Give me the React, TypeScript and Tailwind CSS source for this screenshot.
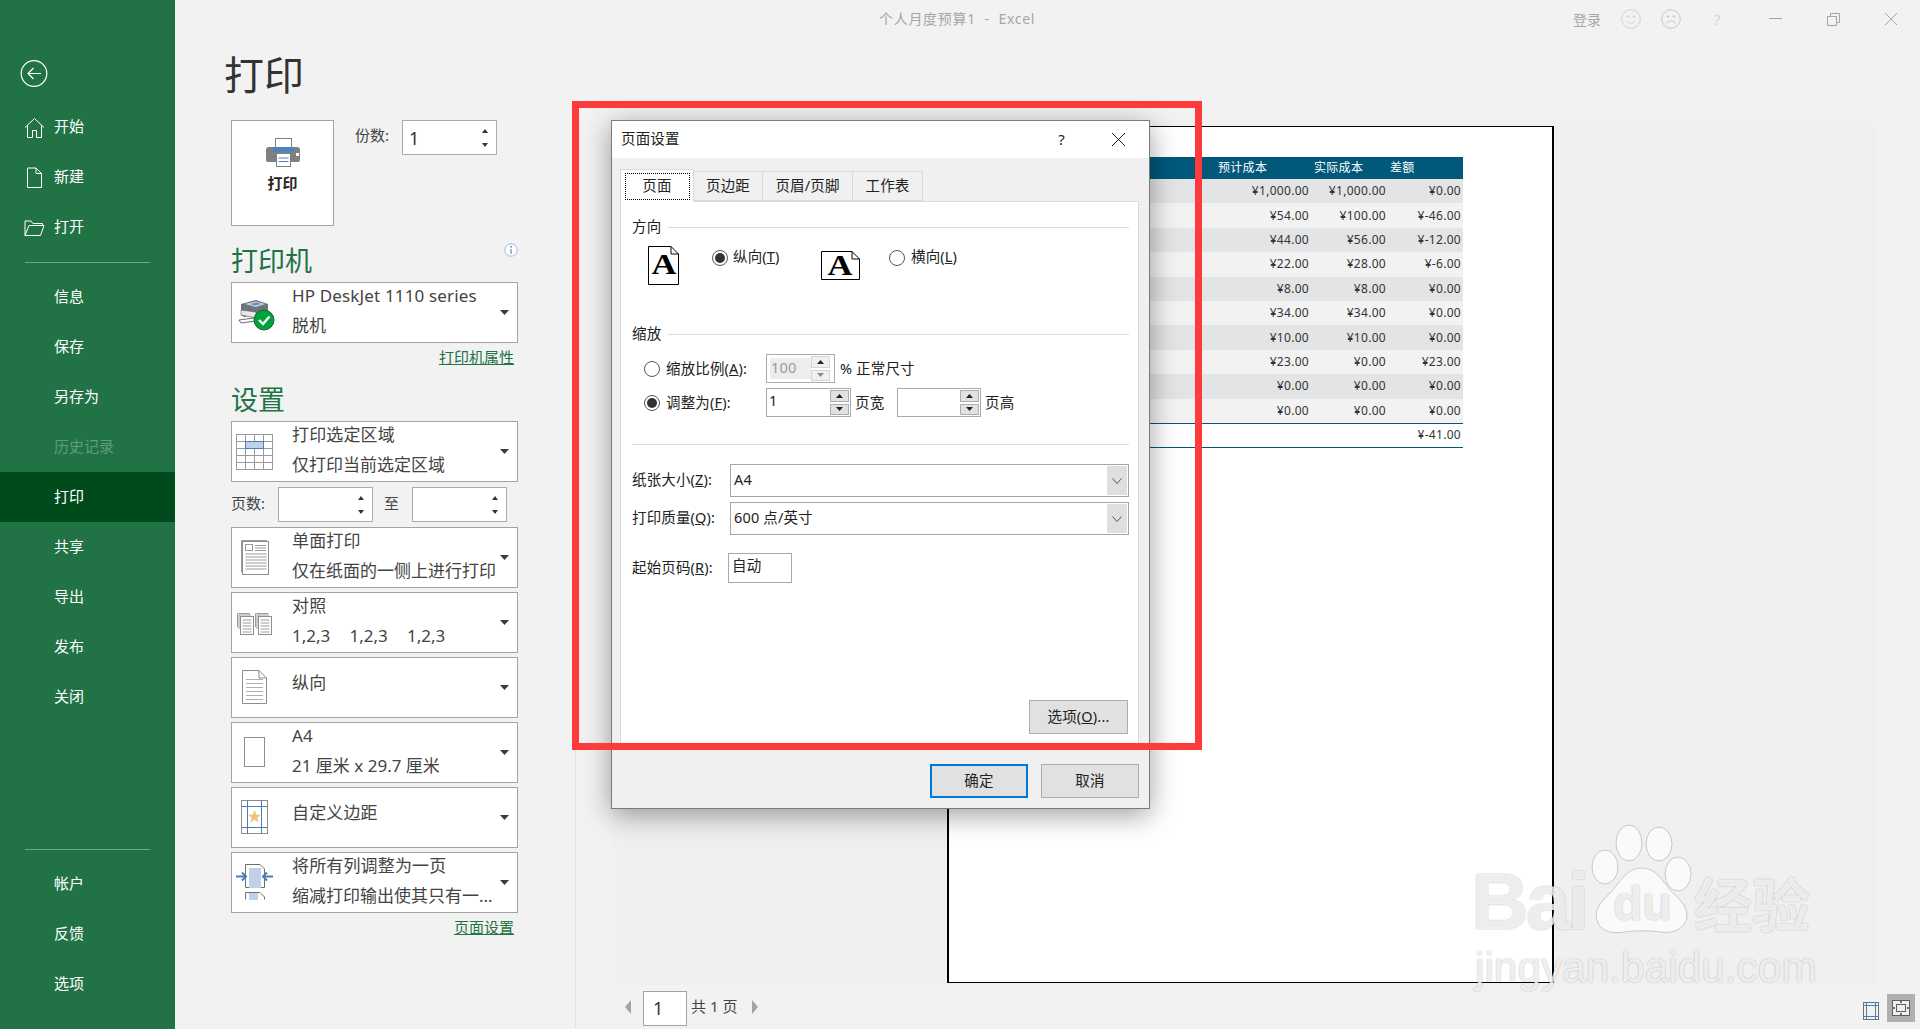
import React from "react";

const Caret = () => (
  <svg width="9" height="5" viewBox="0 0 9 5" className="shrink-0">
    <polygon points="0,0 9,0 4.5,5" fill="#3a3a3a" />
  </svg>
);

const NavIcon = ({ kind }: { kind: string }) => {
  if (kind === "home")
    return (
      <svg width="21" height="21" viewBox="0 0 21 21" fill="none" stroke="#fff" strokeWidth="1">
        <path d="M1 10.5 10.5 1.5 20 10.5M3.5 8.5V20.5H8.5V13.5H12.5V20.5H17.5V8.5" />
      </svg>
    );
  if (kind === "doc")
    return (
      <svg width="21" height="21" viewBox="0 0 21 21" fill="none" stroke="#fff" strokeWidth="1">
        <path d="M3.5 1V20.5H17.5V6.5L12 1H3.5ZM12 1V6.5H17.5" />
      </svg>
    );
  return (
    <svg width="21" height="21" viewBox="0 0 21 21" fill="none" stroke="#fff" strokeWidth="1">
      <path d="M1 18.5V4H7L9 6.5H18.5V8.5M1 18.5H16.5L20 8.5H5L1 18.5Z" />
    </svg>
  );
};

const NavRow = ({ label, icon, active, disabled }: { label: string; icon?: string; active?: boolean; disabled?: boolean }) => (
  <div className={`flex h-[50px] items-center pl-[24px] text-[15px] ${active ? "bg-[#004b1c]" : ""} ${disabled ? "text-[#5f9e7d]" : "text-white"}`}>
    <span className="flex w-[30px] items-center">{icon ? <NavIcon kind={icon} /> : null}</span>
    <span className="pb-[2px]">{label}</span>
  </div>
);

const Sidebar = () => (
  <aside className="flex h-full w-[175px] shrink-0 flex-col bg-[#217346] pb-[20px]">
    <div className="ml-[20px] mt-[59px] h-[28px]">
      <svg width="28" height="29" viewBox="0 0 28 29" fill="none" stroke="#fff" strokeWidth="1.2">
        <circle cx="14" cy="14.5" r="12.8" />
        <path d="M21 14.5H8M13.5 9 8 14.5 13.5 20" />
      </svg>
    </div>
    <div className="mt-[15px]">
      <NavRow label="开始" icon="home" />
      <NavRow label="新建" icon="doc" />
      <NavRow label="打开" icon="folder" />
    </div>
    <div className="mx-[25px] mb-[9px] mt-[10px] h-px bg-[#6fa78b]" />
    <NavRow label="信息" />
    <NavRow label="保存" />
    <NavRow label="另存为" />
    <NavRow label="历史记录" disabled />
    <NavRow label="打印" active />
    <NavRow label="共享" />
    <NavRow label="导出" />
    <NavRow label="发布" />
    <NavRow label="关闭" />
    <div className="mt-auto">
      <div className="mx-[25px] mb-[9px] h-px bg-[#6fa78b]" />
      <NavRow label="帐户" />
      <NavRow label="反馈" />
      <NavRow label="选项" />
    </div>
  </aside>
);

const SpinBox = ({ value }: { value?: string }) => (
  <div className="flex h-[35px] w-[95px] items-center justify-between border border-[#ababab] bg-white pl-[6px] pr-[8px]">
    <span className="text-[18px] leading-none text-[#333]">{value}</span>
    <div className="flex h-full flex-col justify-center gap-[10px]">
      <svg width="6" height="4" viewBox="0 0 6 4"><polygon points="3,0 6,4 0,4" fill="#333" /></svg>
      <svg width="6" height="4" viewBox="0 0 6 4"><polygon points="0,0 6,0 3,4" fill="#333" /></svg>
    </div>
  </div>
);

const G = "#9b9b9b";

const IconPrinter = () => (
  <svg width="44" height="44" viewBox="0 0 44 44" fill="none">
    <path d="M5 13 20 9 32 13 32 22 8 26 5 24Z" fill="#6f7478" />
    <path d="M9 13 20 10.5 29 13 20 16Z" fill="#c9d8e4" />
    <path d="M14 13 21 11.5 25 13 19 14.5Z" fill="#5b8fc4" />
    <path d="M5 19 20 21 20 27 5 24Z" fill="#e8e8e8" stroke="#555" strokeWidth=".6" />
    <path d="M3 29 18 27 20 30 5 32Z" fill="#fff" stroke="#444" strokeWidth=".8" />
    <circle cx="28" cy="29" r="10" fill="#00a33a" stroke="#06712c" />
    <path d="M23 29 27 33 33.5 25.5" stroke="#fff" strokeWidth="2.4" />
  </svg>
);

const IconGrid = () => (
  <svg width="44" height="44" viewBox="0 0 44 44" fill="none" stroke={G}>
    <rect x=".5" y="4.5" width="36" height="35" fill="#fff" />
    <path d="M9.5 4.5v35M18.5 4.5v35M27.5 4.5v35M.5 11.5h36M.5 18.5h36M.5 25.5h36M.5 32.5h36" />
    <rect x="9.5" y="11.5" width="18" height="7" fill="#bfd1e8" stroke="#4a7fb5" />
  </svg>
);

const IconOneSide = () => (
  <svg width="44" height="44" viewBox="0 0 44 44" fill="none" stroke={G}>
    <path d="M5.5 37V5.5H31" />
    <rect x="6.5" y="6.5" width="26" height="33" fill="#fff" stroke="#8d8d8d" />
    <rect x="9.5" y="9.5" width="7" height="6" />
    <path d="M19 10.5h11M19 13h11M19 15.5h11M9.5 19h21M9.5 22h21M9.5 25h21M9.5 28h21M9.5 31h21M9.5 34h21" />
  </svg>
);

const MiniStack = ({ x }: { x: number }) => (
  <g transform={`translate(${x} 0)`}>
    <path d="M.5 27V13.5H13" />
    <path d="M2 29V15H14" />
    <rect x="3.5" y="16.5" width="13" height="18" fill="#fff" stroke="#8d8d8d" />
    <path d="M5.5 20h9M5.5 23h9M5.5 26h9M5.5 29h9M5.5 32h9" />
  </g>
);

const IconCollate = () => (
  <svg width="44" height="44" viewBox="0 0 44 44" fill="none" stroke={G}>
    <MiniStack x={1} />
    <MiniStack x={19} />
  </svg>
);

const IconPortrait = () => (
  <svg width="44" height="44" viewBox="0 0 44 44" fill="none" stroke="#8d8d8d">
    <path d="M6.5 5.5H23L30.5 13V38.5H6.5ZM23 5.5V13H30.5" fill="#fff" />
    <path d="M10 14.5h17M10 18.5h17M10 22.5h17M10 26.5h17M10 30.5h17M10 34.5h17" stroke="#b0b0b0" />
  </svg>
);

const IconPage = () => (
  <svg width="44" height="44" viewBox="0 0 44 44" fill="none">
    <rect x="8.5" y="7.5" width="20" height="29" fill="#fff" stroke="#8d8d8d" />
  </svg>
);

const IconMargins = () => (
  <svg width="44" height="44" viewBox="0 0 44 44" fill="none">
    <rect x="5.5" y="5.5" width="26" height="33" fill="#fff" stroke="#8d8d8d" />
    <path d="M11.5 5.5v33M25.5 5.5v33M5.5 11.5h26M5.5 32.5h26" stroke="#4a7fb5" />
    <polygon points="18.5,15 20.3,19.8 25,19.8 21.3,22.7 22.7,27.5 18.5,24.7 14.3,27.5 15.7,22.7 12,19.8 16.7,19.8" fill="#f0c27b" />
  </svg>
);

const IconFit = () => (
  <svg width="44" height="44" viewBox="0 0 44 44" fill="none">
    <path d="M9.5 27.5V4.5H24L28.5 9V27.5Z" fill="#fff" stroke="#6f6f6f" />
    <rect x="13" y="8" width="12" height="20" fill="#bfd1e8" />
    <path d="M9.5 39.5V32.5H24L28.5 37V39.5" fill="#fff" stroke="#6f6f6f" />
    <rect x="13" y="33" width="9" height="7" fill="#bfd1e8" />
    <path d="M0 16.5H10M6 12.5 10 16.5 6 20.5M37 16.5H27M31 12.5 27 16.5 31 20.5" stroke="#4a7fb5" strokeWidth="2" />
  </svg>
);

const DropRow = ({ icon, a, b }: { icon: React.ReactNode; a: string; b?: React.ReactNode }) => (
  <div className="flex h-[61px] w-[287px] shrink-0 items-center border border-[#a3a3a3] bg-white pr-[8px]">
    <div className="ml-[4px] h-[44px] w-[44px] shrink-0">{icon}</div>
    <div className={`ml-[12px] min-w-0 flex-1 text-[17px] leading-[30px] text-[#444] ${b ? "pb-[3px]" : "mb-[8px]"}`}>
      <div className="whitespace-pre tracking-[0.15px]">{a}</div>
      {b ? <div className="whitespace-pre">{b}</div> : null}
    </div>
    <Caret />
  </div>
);

const LeftColumn = () => (
  <div className="flex h-full w-[400px] shrink-0 flex-col pl-[56px]">
    <h1 className="-ml-[7px] mt-[15px] h-[44px] text-[40px] leading-[44px] text-[#333]">打印</h1>
    <div className="mt-[23px] flex h-[106px] items-start">
      <div className="flex h-[106px] w-[103px] flex-col items-center border border-[#a3a3a3] bg-white pt-[17px]">
        <svg width="34" height="29" viewBox="0 0 34 29" fill="none">
          <rect x="9.5" y=".5" width="16" height="12" fill="#fff" stroke="#808080" />
          <path d="M0 12a3 3 0 0 1 3-3h4v3h20V9h4a3 3 0 0 1 3 3v10a2 2 0 0 1-2 2H2a2 2 0 0 1-2-2Z" fill="#808080" />
          <rect x="7" y="9" width="21" height="5" fill="#4f81bd" />
          <rect x="10.5" y="15.5" width="14" height="13" fill="#fff" stroke="#808080" />
          <path d="M12.5 20h10M12.5 23.5h10" stroke="#4f81bd" />
          <rect x="30" y="15" width="3" height="3" fill="#fff" />
        </svg>
        <span className="mt-[4px] text-[15px] font-bold leading-[24px] text-[#262626]">打印</span>
      </div>
      <span className="ml-[21px] w-[47px] text-[15px] leading-[31px] text-[#444]">份数:</span>
      <SpinBox value="1" />
    </div>
    <div className="mt-[17px] flex h-[36px] w-[287px] items-start justify-between">
      <h2 className="text-[27px] leading-[36px] text-[#217346]">打印机</h2>
      <svg width="14" height="14" viewBox="0 0 14 14" fill="none">
        <circle cx="7" cy="7" r="6.2" fill="#fff" stroke="#9db9e2" />
        <path d="M7 6v5" stroke="#6f98d4" strokeWidth="1.4" />
        <circle cx="7" cy="3.8" r="1" fill="#6f98d4" />
      </svg>
    </div>
    <div className="mt-[3px]">
      <DropRow icon={<IconPrinter />} a="HP DeskJet 1110 series" b="脱机" />
    </div>
    <div className="w-[287px] pb-[2px] pr-[4px] text-right text-[15px] leading-[28px] text-[#217346] underline">打印机属性</div>
    <h2 className="mt-[9px] h-[36px] text-[27px] leading-[36px] text-[#217346]">设置</h2>
    <div className="mt-[3px]">
      <DropRow icon={<IconGrid />} a="打印选定区域" b="仅打印当前选定区域" />
    </div>
    <div className="mt-[5px] flex h-[35px] items-center">
      <span className="w-[47px] pb-[2px] text-[15px] text-[#444]">页数:</span>
      <SpinBox />
      <span className="ml-[11px] w-[28px] pb-[2px] text-[15px] text-[#444]">至</span>
      <SpinBox />
    </div>
    <div className="mt-[4.5px] flex flex-col gap-[4px]">
      <DropRow icon={<IconOneSide />} a="单面打印" b="仅在纸面的一侧上进行打印" />
      <DropRow
        icon={<IconCollate />}
        a="对照"
        b={
          <span className="flex">
            <span className="w-[57.5px]">1,2,3</span>
            <span className="w-[57.5px]">1,2,3</span>
            <span>1,2,3</span>
          </span>
        }
      />
      <DropRow icon={<IconPortrait />} a="纵向" />
      <DropRow icon={<IconPage />} a="A4" b="21 厘米 x 29.7 厘米" />
      <DropRow icon={<IconMargins />} a="自定义边距" />
      <DropRow icon={<IconFit />} a="将所有列调整为一页" b="缩减打印输出使其只有一..." />
    </div>
    <div className="w-[287px] pr-[4px] text-right text-[15px] leading-[28px] text-[#217346] underline">页面设置</div>
  </div>
);

const rows = [
  ["¥1,000.00", "¥1,000.00", "¥0.00"],
  ["¥54.00", "¥100.00", "¥-46.00"],
  ["¥44.00", "¥56.00", "¥-12.00"],
  ["¥22.00", "¥28.00", "¥-6.00"],
  ["¥8.00", "¥8.00", "¥0.00"],
  ["¥34.00", "¥34.00", "¥0.00"],
  ["¥10.00", "¥10.00", "¥0.00"],
  ["¥23.00", "¥0.00", "¥23.00"],
  ["¥0.00", "¥0.00", "¥0.00"],
  ["¥0.00", "¥0.00", "¥0.00"],
];

const Paper = () => (
  <div className="ml-[333px] mt-[4px] h-[857px] w-[607px] border-x-2 border-y border-black bg-white pl-[41px] pt-[30px]">
    <div className="w-[473px] text-[12px] tracking-[0.3px]">
      <div className="flex h-[22px] items-center bg-[#01587a] pl-[228px] text-white">
        <span className="w-[96px]">预计成本</span>
        <span className="w-[76px]">实际成本</span>
        <span>差额</span>
      </div>
      {rows.map((r, i) => (
        <div key={i} className={`flex h-[24.4px] items-center justify-end pr-[2px] text-[#333] ${i % 2 === 0 ? "bg-[#e3e4e6]" : "bg-[#f2f2f2]"}`}>
          <span className="w-[75px] text-right">{r[0]}</span>
          <span className="w-[77px] text-right">{r[1]}</span>
          <span className="w-[75px] text-right">{r[2]}</span>
        </div>
      ))}
      <div className="flex h-[25px] items-center justify-end border-y border-[#01587a] pr-[2px] text-[#333]">¥-41.00</div>
    </div>
  </div>
);

const PageBar = () => (
  <div className="flex flex-1 items-start pt-[6px]">
    <svg width="6" height="14" viewBox="0 0 6 14" className="ml-[49px] mt-[9px]"><polygon points="6,0 6,14 0,7" fill="#a3a3a3" /></svg>
    <div className="ml-[12px] flex h-[35px] w-[44px] items-center border border-[#a3a3a3] bg-white pl-[9px] text-[18px] text-[#333]">1</div>
    <span className="ml-[4px] text-[15px] leading-[31px] text-[#444]">共 1 页</span>
    <svg width="6" height="14" viewBox="0 0 6 14" className="ml-[15px] mt-[9px]"><polygon points="0,0 6,7 0,14" fill="#a3a3a3" /></svg>
    <div className="ml-auto flex items-center pr-[5px]">
      <svg width="16" height="18" viewBox="0 0 16 18" fill="none" className="mt-[8px]">
        <rect x=".5" y=".5" width="15" height="17" stroke="#6f6f6f" />
        <path d="M3.5 0v18M12.5 0v18M0 3.5h16M0 14.5h16" stroke="#4a7fb5" />
      </svg>
      <div className="ml-[8px] mt-[3px] flex h-[28px] w-[28px] items-center justify-center bg-[#b0b0b0]">
        <svg width="18" height="16" viewBox="0 0 18 16" fill="none">
          <rect x=".5" y=".5" width="17" height="15" fill="#eee" stroke="#5f5f5f" />
          <rect x="4.5" y="4.5" width="9" height="7" fill="#eee" stroke="#5f5f5f" />
          <path d="M9 1v2M9 13v2M1 8h2M15 8h2" stroke="#4a7fb5" strokeWidth="2" />
        </svg>
      </div>
    </div>
  </div>
);

const TitleBar = () => (
  <div className="flex h-[38px] shrink-0 items-center text-[#b4b4b4]">
    <span className="ml-[704px] whitespace-pre pb-[2px] text-[14px] tracking-[0.7px] text-[#a6a6a6]">{"个人月度预算1  -  Excel"}</span>
    <div className="ml-auto flex items-center pr-[23px]">
      <span className="text-[14px] text-[#a6a6a6]">登录</span>
      <svg width="20" height="20" viewBox="0 0 20 20" fill="none" stroke="#d0d0d0" className="ml-[20px]">
        <circle cx="10" cy="10" r="9.3" />
        <circle cx="7" cy="7.5" r=".8" fill="#d0d0d0" />
        <circle cx="13" cy="7.5" r=".8" fill="#d0d0d0" />
        <path d="M5.5 11.5c1.5 3.5 7.5 3.5 9 0" />
      </svg>
      <svg width="20" height="20" viewBox="0 0 20 20" fill="none" stroke="#c8c8c8" className="ml-[20px]">
        <circle cx="10" cy="10" r="9.3" />
        <circle cx="7" cy="7.5" r=".8" fill="#c8c8c8" />
        <circle cx="13" cy="7.5" r=".8" fill="#c8c8c8" />
        <path d="M5.5 14.5c1.5-3.5 7.5-3.5 9 0" />
      </svg>
      <span className="ml-[33px] w-[10px] text-[15px] text-[#d6d6d6]">?</span>
      <svg width="13" height="2" viewBox="0 0 13 2" className="ml-[45px]"><rect width="13" height="1" fill="#a6a6a6" /></svg>
      <svg width="13" height="13" viewBox="0 0 13 13" fill="none" stroke="#a6a6a6" className="ml-[45px]">
        <path d="M3.5 3V.5H12.5V9.5H10" />
        <rect x=".5" y="3.5" width="9" height="9" />
      </svg>
      <svg width="12" height="12" viewBox="0 0 12 12" fill="none" stroke="#a6a6a6" className="ml-[45px]">
        <path d="M0 0 12 12M12 0 0 12" />
      </svg>
    </div>
  </div>
);

const Radio = ({ on }: { on?: boolean }) => (
  <span className="flex h-[16px] w-[16px] shrink-0 items-center justify-center rounded-full border border-[#555] bg-white">
    {on ? <span className="h-[10px] w-[10px] rounded-full bg-[#333]" /> : null}
  </span>
);

const Legend = ({ text }: { text: string }) => (
  <div className="flex h-[20px] items-center gap-[7px]">
    <span className="pb-[2px] leading-[20px] text-[#222]">{text}</span>
    <span className="h-px flex-1 bg-[#dcdcdc]" />
  </div>
);

const DlgSpinBtns = ({ dim }: { dim?: boolean }) => (
  <div className="mr-px flex h-[25px] w-[19px] shrink-0 flex-col gap-[2px]">
    <div className={`flex flex-1 items-center justify-center border ${dim ? "border-[#d5d5d5] bg-[#f0f0f0]" : "border-[#adadad] bg-[#e1e1e1]"}`}>
      <svg width="7" height="4" viewBox="0 0 7 4"><polygon points="3.5,0 7,4 0,4" fill="#222" /></svg>
    </div>
    <div className={`flex flex-1 items-center justify-center border ${dim ? "border-[#d5d5d5] bg-[#f0f0f0]" : "border-[#adadad] bg-[#e1e1e1]"}`}>
      <svg width="7" height="4" viewBox="0 0 7 4"><polygon points="0,0 7,0 3.5,4" fill={dim ? "#888" : "#222"} /></svg>
    </div>
  </div>
);

const SelectBox = ({ label, value }: { label: React.ReactNode; value: string }) => (
  <div className="flex h-[33px] items-center">
    <span className="w-[98px] whitespace-nowrap pb-[1px] text-[#222]">{label}</span>
    <div className="flex h-full flex-1 items-center border border-[#a6a6a6] bg-white pl-[3px] text-[#222]">
      <span className="flex-1 pb-[1px]">{value}</span>
      <div className="mr-px flex h-[29px] w-[20px] items-center justify-center bg-[#dfdfdf]">
        <svg width="10" height="6" viewBox="0 0 10 6" fill="none" stroke="#555"><path d="M.5.5 5 5.5 9.5.5" /></svg>
      </div>
    </div>
  </div>
);

const Dialog = () => (
  <div className="absolute left-[611px] top-[120px] flex h-[689px] w-[539px] flex-col border border-[#7a7a7a] bg-[#f0f0f0] text-[14.5px] tracking-[0.15px] shadow-[0_6px_26px_rgba(0,0,0,0.38)]">
    <div className="flex h-[37px] shrink-0 items-center bg-white pl-[9px] pr-[24px] text-[#222]">
      <span className="flex-1 pb-[2px]">页面设置</span>
      <span className="mr-[47px] text-[15px]">?</span>
      <svg width="13" height="13" viewBox="0 0 13 13" fill="none" stroke="#222"><path d="M0 0 13 13M13 0 0 13" /></svg>
    </div>
    <div className="relative z-10 ml-[8px] mt-[10px] flex h-[33px] shrink-0 items-end text-[#222]">
      <div className="-mb-px flex h-[33px] w-[74px] items-center justify-center border border-b-0 border-[#d9d9d9] bg-white">
        <span className="flex h-[27px] w-[65px] items-center justify-center border border-dotted border-black pb-[1px]">页面</span>
      </div>
      <div className="flex h-[30px] w-[69px] items-center justify-center border-y border-r border-[#d9d9d9] pb-[1px]">页边距</div>
      <div className="flex h-[30px] w-[90px] items-center justify-center border-y border-r border-[#d9d9d9] pb-[1px]">页眉/页脚</div>
      <div className="flex h-[30px] w-[70px] items-center justify-center border-y border-r border-[#d9d9d9] pb-[1px]">工作表</div>
    </div>
    <div className="ml-[8px] h-[545px] w-[519px] shrink-0 border border-[#d9d9d9] bg-white pl-[11px] pr-[9px] pt-[15px] text-[#222]">
      <Legend text="方向" />
      <div className="mt-[9px] flex h-[39px] items-start pl-[16px]">
        <svg width="31" height="39" viewBox="0 0 31 39" fill="none">
          <path d="M.5.5H23L30.5 8V38.5H.5ZM23 .5V8H30.5" fill="#fff" stroke="#000" />
          <text x="14" y="28" transform="scale(1.15 1)" textAnchor="middle" fontSize="30" fontWeight="700" fontFamily="'Liberation Serif',serif" fill="#000">A</text>
        </svg>
        <div className="ml-[33px] mt-[4px] flex h-[16px] w-[69px] items-center gap-[5px] whitespace-nowrap">
          <Radio on />
          <span className="pb-[2px]">纵向(<u>T</u>)</span>
        </div>
        <svg width="39" height="41" viewBox="0 -4 39 41" fill="none" className="ml-[40px] mt-px">
          <path d="M.5.5H31L38.5 8V28.5H.5ZM31 .5V8H38.5" fill="#fff" stroke="#000" />
          <text x="16.5" y="24" transform="scale(1.15 1)" textAnchor="middle" fontSize="30" fontWeight="700" fontFamily="'Liberation Serif',serif" fill="#000">A</text>
        </svg>
        <div className="ml-[29px] mt-[4px] flex h-[16px] items-center gap-[6px] whitespace-nowrap">
          <Radio />
          <span className="pb-[2px]">横向(<u>L</u>)</span>
        </div>
      </div>
      <div className="mt-[39px]">
        <Legend text="缩放" />
      </div>
      <div className="mt-[10px] flex h-[29px] items-center">
        <div className="flex w-[134px] items-center gap-[6px] pl-[12px]">
          <Radio />
          <span className="whitespace-nowrap">缩放比例(<u>A</u>):</span>
        </div>
        <div className="flex h-full w-[69px] items-center border border-[#ababab] bg-white p-[3px]">
          <span className="flex h-full flex-1 items-center bg-[#ededed] pb-[2px] pl-[1px] text-[#9a9a9a]">100</span>
          <DlgSpinBtns dim />
        </div>
        <span className="ml-[5px] whitespace-nowrap">% 正常尺寸</span>
      </div>
      <div className="mt-[5px] flex h-[29px] items-center">
        <div className="flex w-[134px] items-center gap-[6px] pl-[12px]">
          <Radio on />
          <span className="whitespace-nowrap">调整为(<u>F</u>):</span>
        </div>
        <div className="flex h-full w-[85px] items-center justify-between border border-[#ababab] bg-white pl-[2px]">
          <span className="pb-[3px]">1</span>
          <DlgSpinBtns />
        </div>
        <span className="ml-[4px] w-[42px]">页宽</span>
        <div className="flex h-full w-[84px] items-center justify-end border border-[#ababab] bg-white">
          <DlgSpinBtns />
        </div>
        <span className="ml-[4px]">页高</span>
      </div>
      <div className="mt-[27px] h-px bg-[#dcdcdc]" />
      <div className="mt-[19px]">
        <SelectBox label={<>纸张大小(<u>Z</u>):</>} value="A4" />
      </div>
      <div className="mt-[5px]">
        <SelectBox label={<>打印质量(<u>Q</u>):</>} value="600 点/英寸" />
      </div>
      <div className="mt-[18px] flex h-[30px] items-center">
        <span className="w-[96px] whitespace-nowrap">起始页码(<u>R</u>):</span>
        <div className="flex h-full w-[64px] items-center border border-[#ababab] pb-[4px] pl-[3px]">自动</div>
      </div>
      <div className="mr-px mt-[117px] flex justify-end">
        <div className="flex h-[34px] w-[99px] items-center justify-center border border-[#adadad] bg-[#e1e1e1] pb-[1px]">选项(<u>O</u>)...</div>
      </div>
    </div>
    <div className="mr-[10px] mt-[18px] flex justify-end gap-[13px] text-[#222]">
      <div className="flex h-[34px] w-[98px] items-center justify-center border-2 border-[#0078d7] bg-[#e1e1e1] pb-[1px]">确定</div>
      <div className="flex h-[34px] w-[98px] items-center justify-center border border-[#adadad] bg-[#e1e1e1] pb-[1px]">取消</div>
    </div>
  </div>
);

const Watermark = () => (
  <div className="pointer-events-none absolute left-[1475px] top-[820px] h-[175px] w-[345px] text-white/80 [text-shadow:0_0_1.5px_rgba(0,0,0,0.35)]">
    <span className="absolute -left-[4px] top-[42px] font-['Liberation_Sans',sans-serif] text-[80px] font-bold leading-[80px] tracking-[-3px]">Bai</span>
    <svg width="110" height="118" viewBox="0 0 110 118" className="absolute left-[115px] top-0" fill="#fbfbfb" fillOpacity=".85" stroke="#c8c8c8" strokeWidth="1">
      <ellipse cx="15" cy="47" rx="13" ry="17" />
      <ellipse cx="39" cy="23" rx="13" ry="18" />
      <ellipse cx="69" cy="24" rx="13" ry="17" />
      <ellipse cx="88" cy="54" rx="13" ry="17" />
      <path d="M52 48C36 48 30 63 20 73 7 85 4 93 8 103c4 9 16 11 26 9 8-1 24-2 36 0 12 2 22-2 26-11 3-9-1-17-12-27C74 65 68 48 52 48Z" />
    </svg>
    <span className="absolute left-[138px] top-[60px] font-['Liberation_Sans',sans-serif] text-[48px] font-bold leading-[48px]">du</span>
    <span className="absolute left-[219px] top-[54px] text-[58px] font-bold leading-[62px]">经验</span>
    <span className="absolute left-0 top-[124px] font-['Liberation_Sans',sans-serif] text-[42.4px] leading-[48px]">jingyan.baidu.com</span>
  </div>
);

export default function App() {
  return (
    <div className="relative flex h-[1029px] w-[1920px] overflow-hidden bg-[#f2f2f2] font-['Noto_Sans','Noto_Sans_CJK_SC',sans-serif]">
      <Sidebar />
      <main className="flex min-w-0 flex-1 flex-col">
        <TitleBar />
        <div className="flex min-h-0 flex-1">
          <LeftColumn />
          <div className="mt-[82px] flex min-w-0 flex-1 flex-col border-l border-[#e1e1e1]">
            <div className="ml-[38px] mt-[2px] h-[863px] w-[1263px] shrink-0 overflow-hidden bg-[#f0f0f0]">
              <Paper />
            </div>
            <PageBar />
          </div>
        </div>
      </main>
      <Dialog />
      <div className="pointer-events-none absolute left-[572px] top-[101px] h-[649px] w-[630px] border-[7px] border-[#fd3a3c]" />
      <Watermark />
    </div>
  );
}
